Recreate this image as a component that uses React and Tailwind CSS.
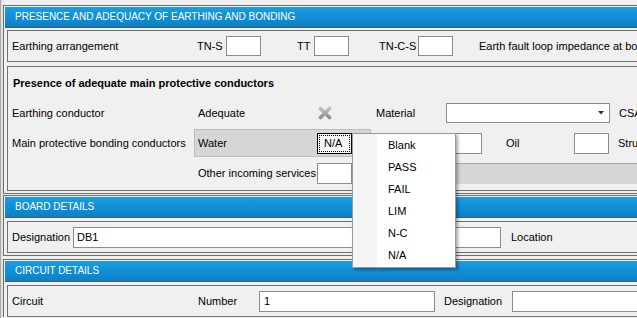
import React from "react";

const Input = ({ w, h = "h-[21px]", children, className = "" }) => (
  <div className={`${w} ${h} shrink-0 bg-white border border-[#8c8c8c] flex items-center ${className}`}>{children}</div>
);

const Header = ({ children }) => (
  <div className="h-[21px] border-b border-[#4f5a63] bg-gradient-to-b from-[#1a9de3] to-[#0a80c8] flex items-center pl-[10px] text-white text-[10px] leading-none whitespace-nowrap">
    {children}
  </div>
);

const XIcon = () => (
  <svg width="16" height="14" viewBox="0 0 16 14" className="shrink-0">
    <defs>
      <linearGradient id="xg" x1="0" y1="0" x2="0" y2="1">
        <stop offset="0" stopColor="#bdbdbd" />
        <stop offset="1" stopColor="#8e8e8e" />
      </linearGradient>
    </defs>
    <path d="M3.5 2.5 L12.5 11.5 M12.5 2.5 L3.5 11.5" stroke="url(#xg)" strokeWidth="3.6" strokeLinecap="round" />
  </svg>
);

export default function App() {
  return (
    <div className="w-[637px] h-[318px] overflow-hidden bg-[#f0f0f0] relative font-['Liberation_Sans',Arial,sans-serif] text-[11px] text-black leading-none">
      <div className="flex w-[760px] h-full">
        <div className="w-[3px] shrink-0 h-full bg-[#e2e2e2] border-l border-[#a8a8a8]" />
        <div className="flex-1 flex flex-col">
          <div className="h-[5px] shrink-0" />
          {/* Section 1 */}
          <div className="border-t border-l border-b border-[#6d6d6d] pt-[1px] pl-[1px]">
            <Header>PRESENCE AND ADEQUACY OF EARTHING AND BONDING</Header>
            <div className="pl-[2px] pt-[2px] pb-[2px] flex flex-col gap-[4px]">
              <div className="h-[32px] border border-[#707070] flex items-center pl-[4px] whitespace-nowrap">
                <span className="w-[185px] shrink-0">Earthing arrangement</span>
                <span className="w-[29px] shrink-0">TN-S</span>
                <Input w="w-[35px]" h="h-[20px]" />
                <span className="ml-[36px] w-[17px] shrink-0">TT</span>
                <Input w="w-[35px]" h="h-[20px]" />
                <span className="ml-[30px] w-[39px] shrink-0">TN-C-S</span>
                <Input w="w-[35px]" h="h-[20px]" />
                <span className="ml-[26px]">Earth fault loop impedance at board</span>
              </div>
              <div className="h-[125px] border border-[#707070] pt-[1px] flex flex-col whitespace-nowrap">
                <div className="h-[30px] flex items-center pl-[5px] font-bold">
                  Presence of adequate main protective conductors
                </div>
                <div className="h-[30px] flex items-center pl-[4px]">
                  <span className="w-[182px] shrink-0">Earthing conductor</span>
                  <span className="w-[123px] shrink-0 pl-[4px]">Adequate</span>
                  <XIcon />
                  <span className="ml-[43px] w-[70px] shrink-0">Material</span>
                  <Input w="w-[164px]" h="h-[20px]" className="justify-end pr-[5px]">
                    <svg width="6" height="4" viewBox="0 0 6 4"><path d="M0 0 H6 L3 3.5 Z" fill="#333" /></svg>
                  </Input>
                  <span className="ml-[9px]">CSA</span>
                </div>
                <div className="h-[30px] flex items-center pl-[4px]">
                  <span className="w-[182px] shrink-0">Main protective bonding conductors</span>
                  <div className="w-[177px] h-[28px] shrink-0 bg-[#d6d6d6] border border-[#bdbdbd] flex items-center pl-[3px]">
                    <span className="w-[119px] shrink-0">Water</span>
                    <div className="w-[35px] h-[21px] shrink-0 border border-black p-[1px] bg-[#f7f7f7]">
                      <div className="w-full h-full border border-dotted border-black flex items-center pl-[4px]">N/A</div>
                    </div>
                  </div>
                  <span className="ml-[5px] w-[71px] shrink-0" />
                  <Input w="w-[35px]" />
                  <span className="ml-[24px] w-[68px] shrink-0">Oil</span>
                  <Input w="w-[35px]" />
                  <span className="ml-[9px]">Structural steel</span>
                </div>
                <div className="h-[30px] flex items-center pl-[4px]">
                  <span className="w-[182px] shrink-0" />
                  <span className="w-[123px] shrink-0 pl-[4px]">Other incoming services</span>
                  <Input w="w-[35px]" />
                  <div className="flex-1 h-[21px] bg-[#d6d6d6] border-t border-[#a9a9a9]" />
                </div>
              </div>
            </div>
          </div>
          {/* Section 2 */}
          <div className="mt-[1px] border-t border-l border-b border-[#6d6d6d] pt-[1px] pl-[1px]">
            <Header>BOARD DETAILS</Header>
            <div className="pl-[2px] pt-[3px] pb-[2px]">
              <div className="h-[32px] border border-[#707070] flex items-center pl-[4px] whitespace-nowrap">
                <span className="w-[61px] shrink-0">Designation</span>
                <Input w="w-[428px]" className="pl-[3px]">DB1</Input>
                <span className="ml-[10px]">Location</span>
              </div>
            </div>
          </div>
          {/* Section 3 */}
          <div className="mt-[3px] border-t border-l border-[#6d6d6d] pt-[1px] pl-[1px]">
            <Header>CIRCUIT DETAILS</Header>
            <div className="pl-[2px] pt-[3px]">
              <div className="h-[32px] border border-[#707070] flex items-center pl-[4px] whitespace-nowrap">
                <span className="w-[186px] shrink-0">Circuit</span>
                <span className="w-[61px] shrink-0">Number</span>
                <Input w="w-[176px]" className="pl-[4px]">1</Input>
                <span className="ml-[9px] w-[68px] shrink-0">Designation</span>
                <Input w="w-[200px]" />
              </div>
            </div>
          </div>
        </div>
      </div>

      {/* Dropdown menu */}
      <div className="absolute left-[352px] top-[133px] w-[104px] h-[135px] bg-white border border-[#9a9a9a] shadow-[2px_2px_3px_rgba(0,0,0,0.35)] flex">
        <div className="w-[24px] shrink-0 bg-[#f4f4f4]" />
        <div className="flex-1 flex flex-col py-[1px] pl-[11px]">
          {["Blank", "PASS", "FAIL", "LIM", "N-C", "N/A"].map((t) => (
            <div key={t} className="h-[22px] flex items-center">{t}</div>
          ))}
        </div>
      </div>
    </div>
  );
}
